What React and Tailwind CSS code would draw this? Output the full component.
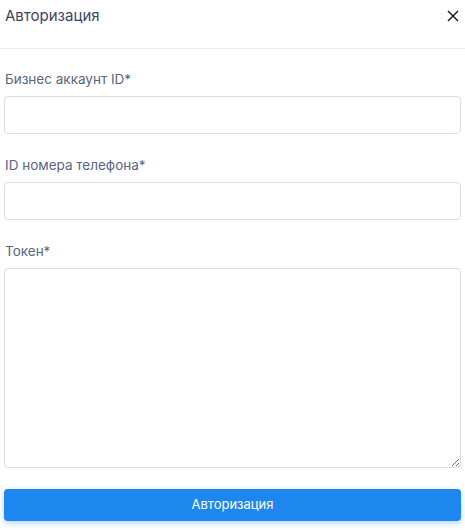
export default function App() {
  return (
    <div className="w-[465px] h-[530px] bg-white" style={{ fontFamily: "Inter, 'Noto Sans', sans-serif" }}>
      <div className="h-[49px] border-b border-[#e8ebf0] flex items-start justify-between pl-[5px] pr-[5px] pt-[6px]">
        <span className="text-[15px] leading-[20px] text-[#3b4563]">Авторизация</span>
        <svg width="12" height="12" viewBox="0 0 12 12" className="mt-[4px] mr-[1px]">
          <path d="M1 1L11 11M11 1L1 11" stroke="#111" strokeWidth="1.4" />
        </svg>
      </div>
      <div className="px-[4px] pt-[20px] flex flex-col">
        <label className="text-[13.5px] leading-[20px] text-[#576680] mb-[7px] pl-[1px]">Бизнес аккаунт ID*</label>
        <input className="h-[38px] border border-[#d9dde5] rounded-[4px] outline-none" />
        <label className="text-[13.5px] leading-[20px] text-[#576680] mt-[21px] mb-[7px] pl-[1px]">ID номера телефона*</label>
        <input className="h-[38px] border border-[#d9dde5] rounded-[4px] outline-none" />
        <label className="text-[13.5px] leading-[20px] text-[#576680] mt-[21px] mb-[7px] pl-[1px]">Токен*</label>
        <textarea className="h-[200px] border border-[#d9dde5] rounded-[4px] outline-none resize-y" />
        <button className="mt-[21px] h-[32px] rounded-[4px] bg-[#1e87ef] text-white text-[13px] shadow-[0_2px_6px_rgba(30,135,239,0.35)]">
          Авторизация
        </button>
      </div>
    </div>
  );
}
